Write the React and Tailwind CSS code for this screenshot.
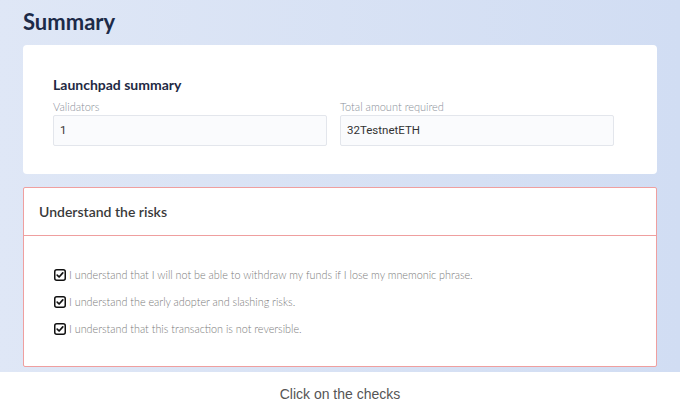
function Check() {
  return (
    <svg width="12" height="12" viewBox="0 0 12 12" className="shrink-0">
      <rect x="0.75" y="0.75" width="10.5" height="10.5" rx="2" fill="white" stroke="#111" strokeWidth="1.5" />
      <path d="M3.2 6.2 L5.1 8 L8.8 3.9" fill="none" stroke="#111" strokeWidth="1.7" strokeLinecap="round" strokeLinejoin="round" />
    </svg>
  )
}

const risks = [
  'I understand that I will not be able to withdraw my funds if I lose my mnemonic phrase.',
  'I understand the early adopter and slashing risks.',
  'I understand that this transaction is not reversible.',
]

export default function App() {
  return (
    <div className="h-[402px] w-[680px] bg-white font-['Lato',sans-serif]">
      <div className="h-[372px] bg-gradient-to-r from-[#dfe7f6] to-[#d1ddf3] px-[23px] pt-[7px]">
        <h1 className="text-[22px] font-bold leading-[30px] text-[#1c2a48]">Summary</h1>

        <div className="mt-[8px] h-[129px] rounded-[4px] bg-white px-[30px] pt-[31px]">
          <h2 className="text-[14px] font-bold leading-[18px] text-[#1f2a44]">Launchpad summary</h2>
          <div className="mt-[6px] flex gap-[13px]">
            <div className="w-[274px]">
              <div className="text-[11px] font-light leading-[14px] text-[#8a8f99]">Validators</div>
              <div className="mt-[1px] flex h-[31px] items-center rounded-[2px] border border-[#e3e6ec] bg-[#fafbfd] px-[6px] font-['Roboto',sans-serif] text-[11.5px] text-[#333]">
                1
              </div>
            </div>
            <div className="w-[274px]">
              <div className="text-[11px] font-light leading-[14px] text-[#8a8f99]">Total amount required</div>
              <div className="mt-[1px] flex h-[31px] items-center rounded-[2px] border border-[#e3e6ec] bg-[#fafbfd] px-[6px] font-['Roboto',sans-serif] text-[11.5px] text-[#333]">
                32TestnetETH
              </div>
            </div>
          </div>
        </div>

        <div className="mt-[13px] h-[180px] rounded-[2px] border border-[#ef9f9f] bg-white">
          <div className="flex h-[48px] items-center border-b border-[#ef9f9f] px-[15px]">
            <h3 className="text-[14px] font-semibold text-[#3a3a3a]">Understand the risks</h3>
          </div>
          <div className="flex flex-col gap-[15px] px-[30px] pt-[33px]">
            {risks.map((r) => (
              <label key={r} className="flex items-center gap-[3px] text-[10.8px] font-light leading-[12px] text-[#7a7a7a]">
                <Check />
                <span>{r}</span>
              </label>
            ))}
          </div>
        </div>
      </div>
      <div className="pt-[12px] text-center font-['Liberation_Sans',sans-serif] text-[14px] text-[#555]">
        Click on the checks
      </div>
    </div>
  )
}
